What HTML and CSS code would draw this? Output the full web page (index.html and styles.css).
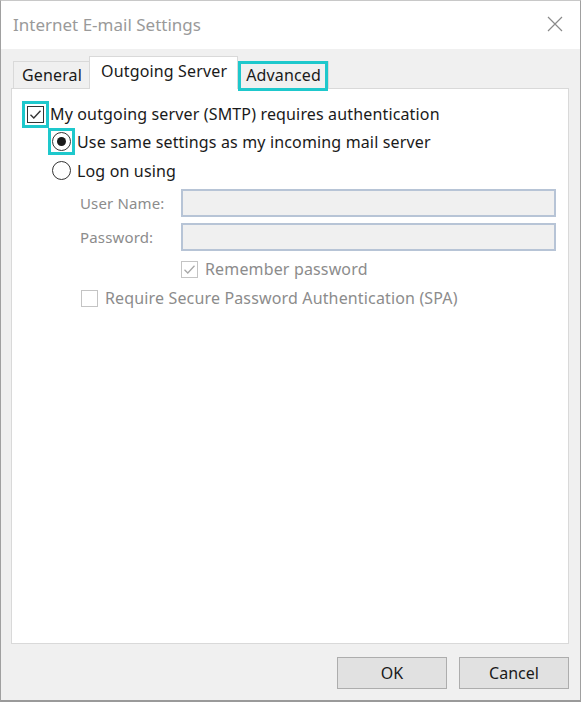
FILE: index.html
```html
<!DOCTYPE html>
<html>
<head>
<meta charset="utf-8">
<link rel="stylesheet" href="styles.css">
</head>
<body>
<div class="window">
  <div class="titlebar">
    <span class="title">Internet E-mail Settings</span>
    <svg class="close" width="16" height="16" viewBox="0 0 16 16"><path d="M1 1 L15 15 M15 1 L1 15" stroke="#8a8a8a" stroke-width="1.2" fill="none"/></svg>
  </div>
  <div class="content">
    <div class="tabs">
      <div class="tab">General</div>
      <div class="tab active">Outgoing Server</div>
      <div class="tab hl">Advanced</div>
    </div>
    <div class="panel">
      <div class="row main">
        <span class="cb checked hlbox">
          <svg width="13" height="13" viewBox="0 0 13 13"><path d="M1.5 6.8 L4.8 10 L11.5 2.8" stroke="#333" stroke-width="1.4" fill="none"/></svg>
        </span>
        <span class="label">My outgoing server (SMTP) requires authentication</span>
      </div>
      <div class="row sub first">
        <span class="rwrap hlbox"><span class="radio on"><span class="dot"></span></span></span>
        <span class="label">Use same settings as my incoming mail server</span>
      </div>
      <div class="row sub">
        <span class="rwrap"><span class="radio"></span></span>
        <span class="label">Log on using</span>
      </div>
      <div class="form">
        <span class="flabel">User Name:</span>
        <span class="field"></span>
        <span class="flabel">Password:</span>
        <span class="field"></span>
        <span></span>
        <div class="row remember">
          <span class="cb disabled">
            <svg width="13" height="13" viewBox="0 0 13 13"><path d="M1.5 6.8 L4.8 10 L11.5 2.8" stroke="#a8a8a8" stroke-width="1.3" fill="none"/></svg>
          </span>
          <span class="label dis">Remember password</span>
        </div>
      </div>
      <div class="row spa">
        <span class="cb disabled"></span>
        <span class="label dis">Require Secure Password Authentication (SPA)</span>
      </div>
    </div>
    <div class="footer">
      <button class="btn">OK</button>
      <button class="btn">Cancel</button>
    </div>
  </div>
</div>
</body>
</html>
```
FILE: styles.css
```css
html, body {
  margin: 0;
  padding: 0;
  background: #fff;
}
body {
  font-family: "Noto Sans", "Open Sans", sans-serif;
  font-size: 16px;
  letter-spacing: 0.15px;
  color: #1a1a1a;
}
.window {
  width: 581px;
  height: 702px;
  box-sizing: border-box;
  border: 1px solid #a0a0a0;
  border-top: 1px solid #c8c8c8;
  border-bottom: 2px solid #9a9a9a;
  display: flex;
  flex-direction: column;
  background: #f0f0f0;
}
.titlebar {
  height: 48px;
  flex: none;
  background: #fff;
  display: flex;
  align-items: center;
  justify-content: space-between;
  padding: 0 17px 0 12px;
}
.title {
  font-size: 17px;
  letter-spacing: 0;
  color: #9a9a9a;
  margin-top: -2px;
}
.close {
  margin-top: -2px;
}
.content {
  flex: 1;
  display: flex;
  flex-direction: column;
  padding: 8px 11px 0 10px;
}
.tabs {
  display: flex;
  align-items: flex-end;
  height: 31px;
  padding-left: 2px;
  position: relative;
  z-index: 1;
}
.tab {
  height: 27px;
  box-sizing: border-box;
  border: 1px solid #d9d9d9;
  border-bottom: none;
  padding: 0 7px 0 8px;
  display: flex;
  align-items: center;
  background: #f0f0f0;
  position: relative;
}
.tab + .tab {
  margin-left: -1px;
}
.tab.active {
  height: 33px;
  margin-bottom: -1px;
  background: #fff;
  padding: 0 10px 4px 11px;
}
.tab.hl::after {
  content: "";
  position: absolute;
  left: 0;
  top: -1px;
  right: 0;
  bottom: -3px;
  border: 3px solid #1ec8cc;
}
.panel {
  height: 556px;
  flex: none;
  box-sizing: border-box;
  background: #fff;
  border: 1px solid #d9d9d9;
  padding: 14px 0 0 15px;
}
.row {
  display: flex;
  align-items: center;
}
.cb {
  width: 17px;
  height: 17px;
  box-sizing: border-box;
  border: 1px solid #333;
  display: flex;
  align-items: center;
  justify-content: center;
  background: #fff;
  flex: none;
}
.cb.disabled {
  border-color: #c4c4c4;
}
.hlbox {
  outline: 3px solid #1ec8cc;
  outline-offset: 2px;
}
.main .label {
  margin-left: 6px;
}
.rwrap {
  width: 19px;
  height: 19px;
  display: flex;
  flex: none;
}
.rwrap.hlbox {
  outline-offset: 1px;
}
.radio {
  width: 19px;
  height: 19px;
  box-sizing: border-box;
  border: 1px solid #333;
  border-radius: 50%;
  display: flex;
  align-items: center;
  justify-content: center;
  background: #fff;
}
.dot {
  width: 9px;
  height: 9px;
  border-radius: 50%;
  background: #1a1a1a;
}
.sub {
  margin-left: 25px;
  height: 29px;
}
.sub.first {
  margin-top: 2px;
}
.sub .label {
  margin-left: 6px;
}
.form {
  display: grid;
  grid-template-columns: 101px 375px;
  grid-auto-rows: 28px;
  row-gap: 6px;
  margin-left: 53px;
  margin-top: 4px;
}
.flabel {
  color: #8c8c8c;
  font-size: 15px;
  display: flex;
  align-items: center;
}
.field {
  box-sizing: border-box;
  border: 2px solid #b7c4d6;
  background: #f0f0f0;
}
.remember {
  height: 24px;
}
.remember .label {
  margin-left: 7px;
}
.dis {
  color: #8c8c8c;
}
.spa {
  margin-left: 54px;
  margin-top: 2px;
}
.spa .label {
  margin-left: 7px;
}
.footer {
  display: flex;
  justify-content: flex-end;
  gap: 12px;
  padding-top: 13px;
}
.btn {
  width: 110px;
  height: 32px;
  box-sizing: border-box;
  border: 1px solid #adadad;
  background: #e1e1e1;
  font-family: "Noto Sans", "Open Sans", sans-serif;
  font-size: 16px;
  color: #1a1a1a;
  padding: 0;
}
```
